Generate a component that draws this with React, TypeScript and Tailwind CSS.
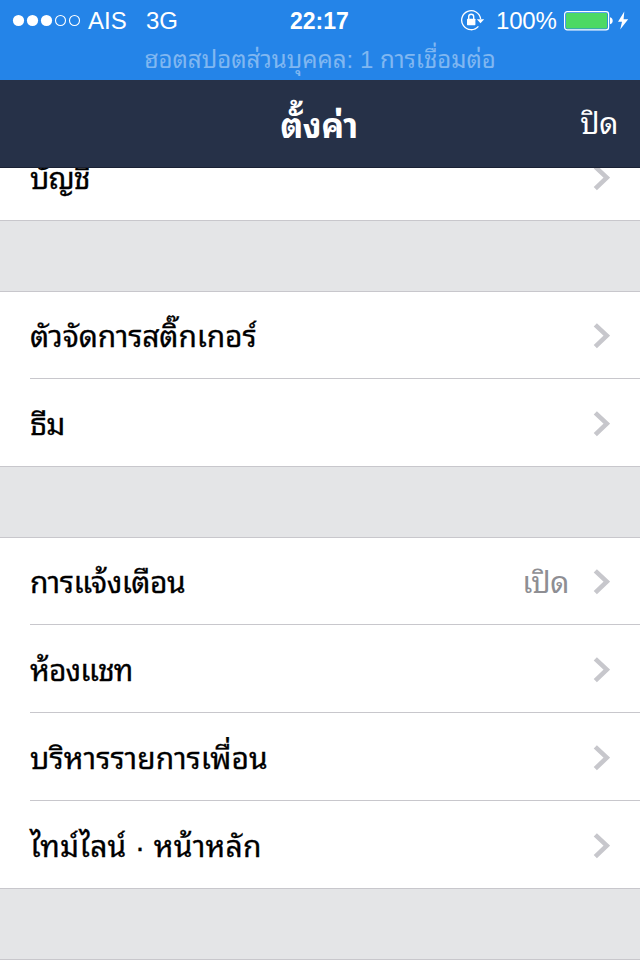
type Item = {
  label: string;
  labelClass?: string;
  value?: string;
};

const accountItems: Item[] = [{ label: 'บัญชี', labelClass: 'tracking-[-0.9px]' }];

const themeItems: Item[] = [
  { label: 'ตัวจัดการสติ๊กเกอร์', labelClass: 'tracking-[-0.12px]' },
  { label: 'ธีม', labelClass: 'tracking-[-0.7px]' }
];

const generalItems: Item[] = [
  { label: 'การแจ้งเตือน', labelClass: 'tracking-[-0.5px]', value: 'เปิด' },
  { label: 'ห้องแชท', labelClass: 'tracking-[-0.9px]' },
  { label: 'บริหารรายการเพื่อน', labelClass: 'tracking-[0.05px]' },
  { label: 'ไทม์ไลน์ · หน้าหลัก', labelClass: 'tracking-[0.2px]' }
];

function StatusBar() {
  return (
    <div className="h-20 bg-[#2484e8] text-white">
      <div className="flex h-[42px] items-center text-[24px] leading-none">
        <svg className="ml-3 shrink-0" width="70" height="14" viewBox="0 0 70 14">
          {[6.5, 20.5, 34.5].map((cx) => (
            <circle key={cx} cx={cx} cy="6.5" r="5.6" fill="#fff" />
          ))}
          {[48.5, 62.5].map((cx) => (
            <circle key={cx} cx={cx} cy="6.5" r="5" fill="none" stroke="#fff" strokeWidth="1.1" />
          ))}
        </svg>
        <span className="ml-[6px] w-[58px] shrink-0">AIS</span>
        <span className="w-[144px] shrink-0">3G</span>
        <span className="w-[170px] shrink-0 text-[23px] font-bold">22:17</span>
        <svg className="shrink-0" width="26" height="22" viewBox="0 0 26 22" fill="none">
          <path d="M20.6 9A9.5 9.5 0 1 0 18.4 16.4" stroke="#fff" strokeWidth="1.3" />
          <path d="M16.8 9.2h7.4L20.5 13.2z" fill="#fff" />
          <rect x="7" y="8.7" width="8.4" height="6.5" rx="0.6" fill="#fff" />
          <path d="M8.7 9V6.8a2.5 2.5 0 0 1 5 0V9" stroke="#fff" strokeWidth="1.4" />
        </svg>
        <span className="ml-[10px] w-[68px] shrink-0 tracking-[-0.2px]">100%</span>
        <svg className="shrink-0" width="66" height="20" viewBox="0 0 66 20">
          <rect x="0.6" y="0.6" width="44" height="18.2" rx="2.6" fill="none" stroke="#fff" strokeWidth="1.2" />
          <rect x="2" y="2" width="41.2" height="15.4" rx="1" fill="#4cd964" />
          <path d="M46 6.2c3.6.8 3.6 6.2 0 7z" fill="#fff" />
          <path d="M60.3 0.6L54 10.8h4L56.2 18.6 64.2 8.2h-4.6z" fill="#fff" />
        </svg>
      </div>
      <p className="text-center text-[24px] leading-9 text-[#80b7f1]">ฮอตสปอตส่วนบุคคล: 1 การเชื่อมต่อ</p>
    </div>
  );
}

function Header() {
  return (
    <header className="relative z-10 grid h-[88px] grid-cols-[1fr_auto_1fr] items-center border-b border-[#1a2134] bg-[#263148] text-white">
      <h1 className="col-start-2 pr-[2px] pt-1 text-[34px] font-bold leading-[48px] tracking-[-0.5px]">ตั้งค่า</h1>
      <button className="mr-[22px] justify-self-end text-[30px] leading-[48px] tracking-[-0.4px]">ปิด</button>
    </header>
  );
}

function Row({ item, last }: { item: Item; last: boolean }) {
  return (
    <li className="h-[88px] first:h-[87px] last:h-[87px]">
      <div className={`flex h-full items-center pr-[30px] pt-[2px] ${last ? 'pl-[30px]' : 'ml-[30px] border-b border-[#c8c7cc]'}`}>
        <span className={`grow pt-[2px] text-[30px] leading-[44px] text-black [-webkit-text-stroke:0.3px] ${item.labelClass ?? ''}`}>
          {item.label}
        </span>
        {item.value && (
          <span className="mr-6 pt-[2px] text-[30px] leading-[44px] tracking-[-0.4px] text-[#8e8e93]">{item.value}</span>
        )}
        <svg className="shrink-0" width="17" height="26" viewBox="0 0 17 26" fill="none">
          <path d="M2.3 1.8L13.8 12.7L2.3 23.6" stroke="#c7c7cc" strokeWidth="4.6" />
        </svg>
      </div>
    </li>
  );
}

function Group({ items }: { items: Item[] }) {
  return (
    <ul className="border-y border-[#c8c7cc] bg-white">
      {items.map((item, index) => (
        <Row key={item.label} item={item} last={index === items.length - 1} />
      ))}
    </ul>
  );
}

export default function App() {
  return (
    <div className="h-[960px] w-[640px] overflow-hidden bg-[#e4e5e7] font-['Liberation_Sans','Thonburi','Noto_Sans_Thai_Looped','Loma','Garuda','Waree','Noto_Sans_Thai',sans-serif]">
      <StatusBar />
      <Header />
      <main className="-mt-9 flex flex-col gap-[70px]">
        <Group items={accountItems} />
        <Group items={themeItems} />
        <Group items={generalItems} />
        <div className="h-px bg-[#c8c7cc]" />
      </main>
    </div>
  );
}
